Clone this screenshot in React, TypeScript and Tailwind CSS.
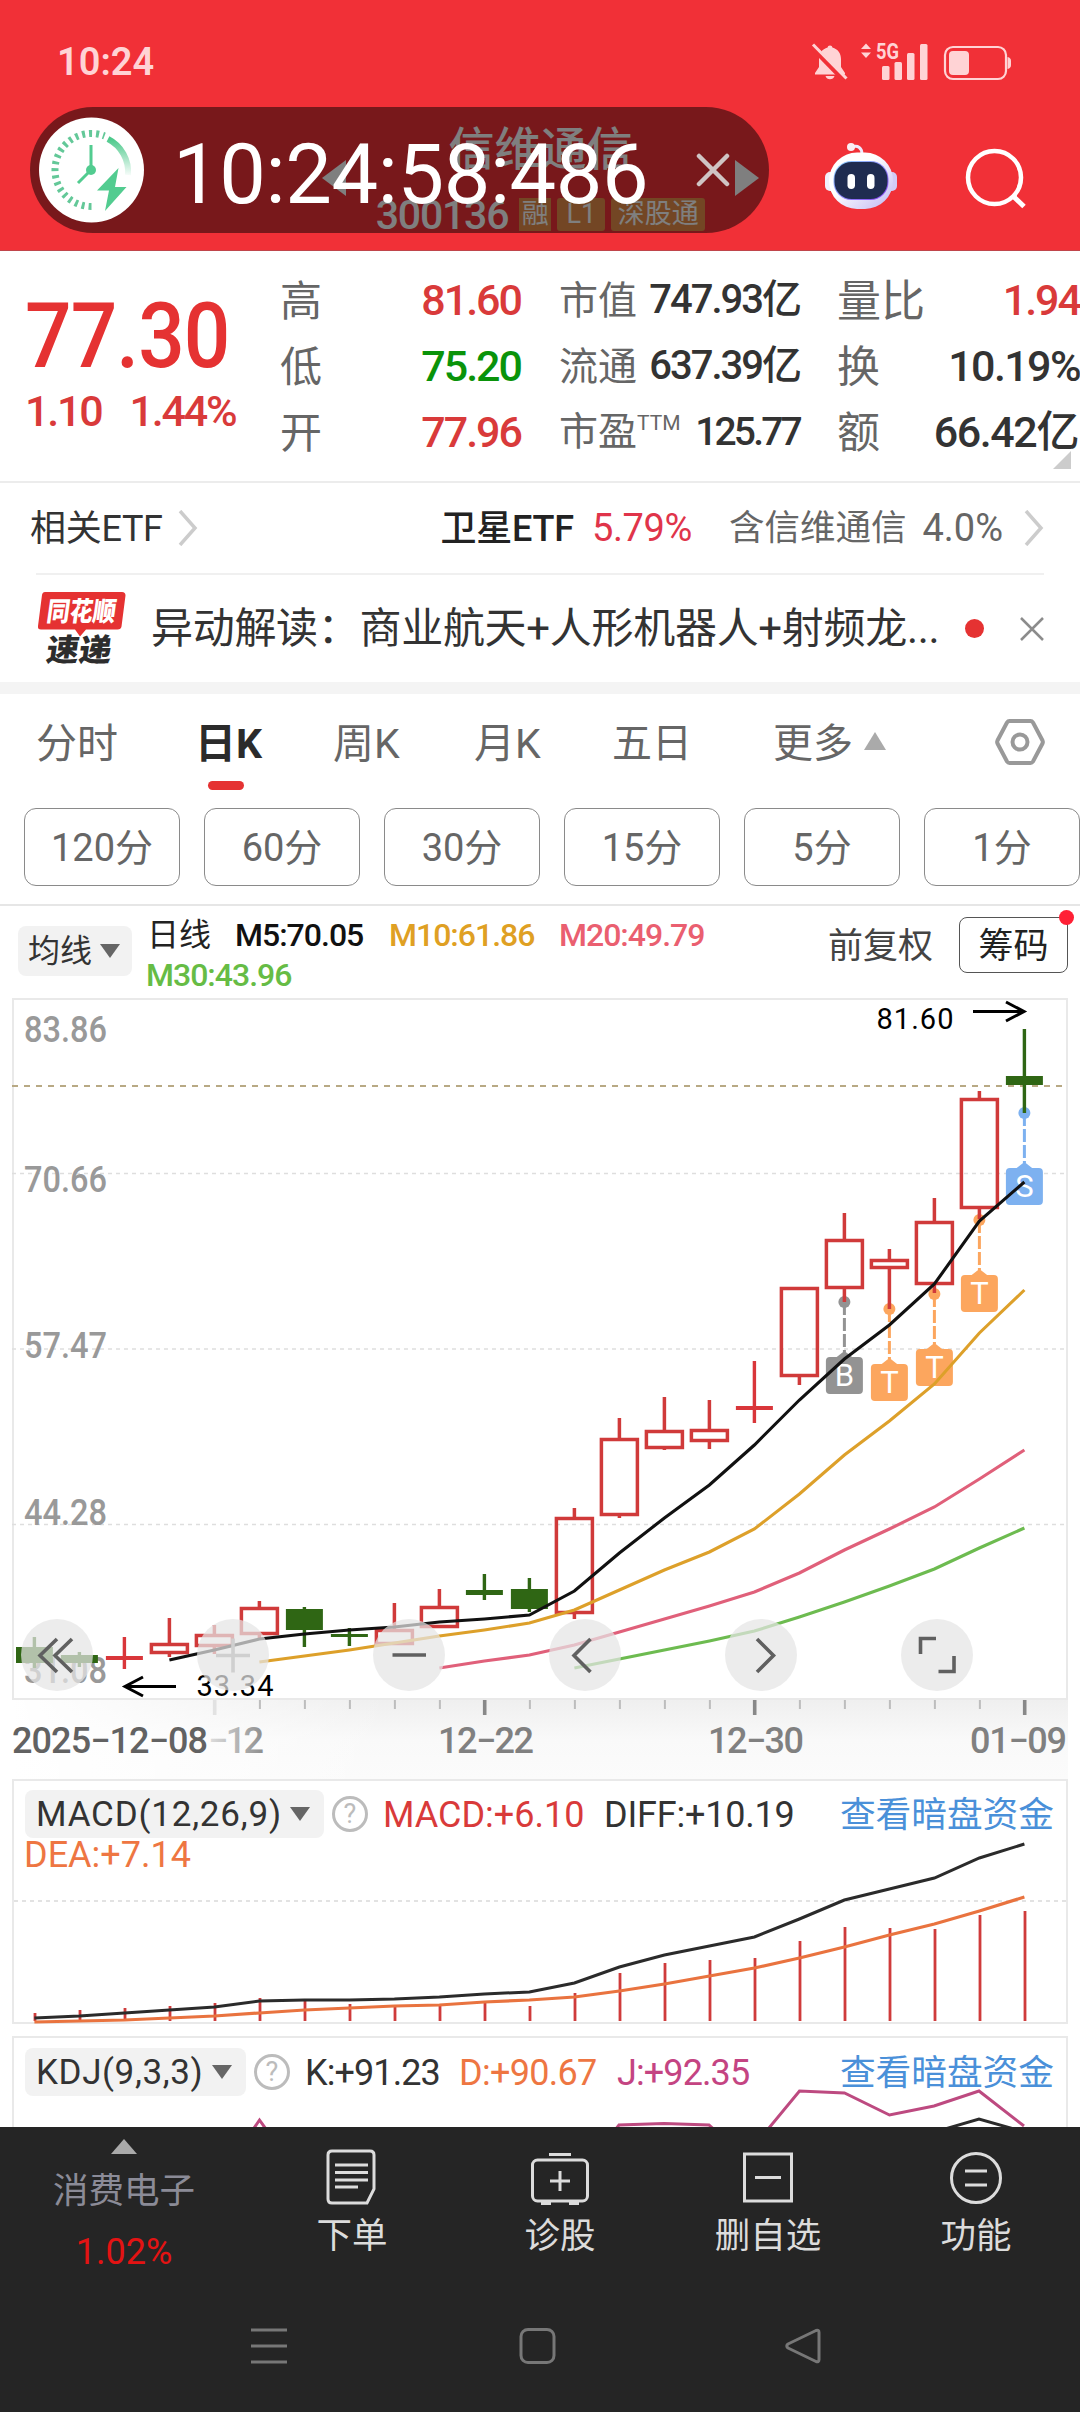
import React from "react";

const candles = [
  // [high, bodyTop, bodyBottom, low, kind]
  [1637, 1647, 1663, 1668, 0],
  [1652, 1655, 1663, 1667, 0],
  [1637, 1656, 1660, 1669, 2],
  [1618, 1643, 1654, 1657, 1],
  [1625, 1634, 1647, 1654, 1],
  [1601, 1607, 1635, 1638, 1],
  [1607, 1609, 1630, 1647, 0],
  [1628, 1634, 1637, 1646, 0],
  [1603, 1629, 1645, 1645, 1],
  [1589, 1606, 1628, 1628, 1],
  [1574, 1590, 1595, 1600, 0],
  [1578, 1589, 1609, 1612, 0],
  [1508, 1517, 1614, 1619, 1],
  [1418, 1438, 1516, 1518, 1],
  [1397, 1430, 1449, 1450, 1],
  [1400, 1429, 1442, 1449, 1],
  [1361, 1406, 1410, 1423, 2],
  [1287, 1287, 1377, 1385, 1],
  [1213, 1239, 1289, 1302, 1],
  [1249, 1259, 1269, 1309, 1],
  [1198, 1221, 1285, 1293, 1],
  [1091, 1098, 1209, 1219, 1],
  [1029, 1076, 1085, 1113, 0],
];

const ma5 = [1660, 1650, 1639, 1634, 1630, 1627, 1622, 1619, 1615, 1591, 1553, 1518, 1485, 1445, 1400, 1359, 1325, 1284, 1221, 1182];
const ma10 = [1662, 1656, 1650, 1643, 1636, 1630, 1623, 1610, 1590, 1570, 1552, 1529, 1494, 1455, 1421, 1384, 1333, 1290];
const ma20 = [1668, 1661, 1655, 1645, 1632, 1619, 1606, 1592, 1573, 1550, 1529, 1507, 1479, 1450];
const ma30 = [1668, 1659, 1650, 1641, 1631, 1617, 1602, 1586, 1569, 1548, 1528];

const macdBars = [2013, 2010, 2008, 2006, 2003, 1998, 2001, 2004, 2007, 2005, 2003, 2006, 1993, 1973, 1963, 1960, 1958, 1941, 1927, 1928, 1929, 1915, 1911];
const diff = [2018, 2016, 2013, 2010, 2007, 2001, 2000, 2000, 1999, 1997, 1994, 1992, 1983, 1967, 1955, 1946, 1937, 1919, 1900, 1889, 1878, 1858, 1844];
const dea = [2022, 2021, 2020, 2018, 2016, 2013, 2010, 2008, 2006, 2005, 2002, 2000, 1997, 1991, 1984, 1976, 1968, 1958, 1947, 1935, 1924, 1911, 1897];

const markers = [
  { i: 18, y: 1302, text: "B", color: "#939393" },
  { i: 19, y: 1309, text: "T", color: "#fca65e" },
  { i: 20, y: 1294, text: "T", color: "#fca65e" },
  { i: 21, y: 1220, text: "T", color: "#fca65e" },
  { i: 22, y: 1113, text: "S", color: "#7db1f0" },
];

const cx = (i: number) => 34.4 + i * 45;

// the values always end on the last candle
const toPoints = (values: number[]) =>
  values.map((y, k) => `${cx(23 - values.length + k)},${y}`).join(" ");

const StatusBar = () => (
  <div className="flex h-[107px] items-start justify-between pl-[57px] pr-[68px] text-[#ffd3d5]">
    <span className="mt-[43px] text-[38px] font-semibold leading-none">10:24</span>
    <svg width="202" height="50" viewBox="810 35 202 50" className="mt-[35px]" fill="#ffd3d5">
      <path d="M830 45.500c1.500 0 2.200.8 2.400 2 5.500 1.500 8.600 6 8.600 11.500v8l4 6v1.500H815v-1.500l4-6v-8c0-5.500 3.100-10 8.600-11.500.2-1.200.9-2 2.400-2zM825.500 76h9c-.8 2.200-2.300 3.200-4.500 3.200s-3.700-1-4.500-3.200z" />
      <path d="M811 45.500L844.500 80" stroke="#f13037" strokeWidth="6" />
      <path d="M813 44.500L846.500 78.500" stroke="#ffd3d5" strokeWidth="3" />
      <path d="M866 43.500l5 5.500h-10zM866 58l5-5.500h-10z" />
      <text x="876" y="59" fontSize="22" fontWeight="700" textLength="23" lengthAdjust="spacingAndGlyphs">5G</text>
      <rect x="882" y="66" width="7.500" height="14" rx="1.500" />
      <rect x="894.500" y="62" width="7.500" height="18" rx="1.500" />
      <rect x="907" y="53" width="7.500" height="27" rx="1.500" />
      <rect x="920" y="44" width="7.500" height="36" rx="1.500" />
      <rect x="945" y="47" width="61" height="32" rx="8" fill="none" stroke="#ffd3d5" strokeWidth="2.200" />
      <rect x="949" y="51" width="20" height="24" rx="4" />
      <path d="M1007.500 57c2.500.4 3.500 2 3.500 4v4c0 2-1 3.600-3.500 4z" />
    </svg>
  </div>
);

const Robot = () => (
  <svg width="74" height="68" viewBox="824 142 74 68">
    <defs>
      <linearGradient id="shell" x1="0" y1="0" x2="1" y2="1">
        <stop offset="0.400" stopColor="#ffffff" />
        <stop offset="1" stopColor="#bfb6f2" />
      </linearGradient>
      <linearGradient id="visor" x1="0" y1="0" x2="1" y2="1">
        <stop offset="0" stopColor="#8fd8ff" />
        <stop offset="1" stopColor="#8a3df0" />
      </linearGradient>
    </defs>
    <path d="M852 147c6-2 10 1 10 7" fill="none" stroke="#efeafd" strokeWidth="3" />
    <circle cx="851" cy="147" r="4" fill="#fbeef4" />
    <rect x="825" y="172" width="12" height="19" rx="5" fill="#f1effc" />
    <rect x="885" y="172" width="12" height="19" rx="5" fill="#d2cbf5" />
    <rect x="829" y="152.500" width="64" height="56.500" rx="28" fill="url(#shell)" />
    <rect x="833.500" y="161" width="55" height="39" rx="18" fill="url(#visor)" />
    <rect x="834.500" y="162" width="53" height="37" rx="17" fill="#1f2c50" />
    <rect x="847.500" y="174" width="7.500" height="15" rx="3.700" fill="#fff" />
    <rect x="867" y="174" width="7.500" height="15" rx="3.700" fill="#fff" />
  </svg>
);

const ClockLogo = () => (
  <svg width="106" height="106" viewBox="39 116 106 106" className="shrink-0">
    <defs>
      <linearGradient id="sweep" x1="0" y1="0" x2="0" y2="1">
        <stop offset="0" stopColor="#4cc98b" />
        <stop offset="1" stopColor="#4cc98b" stopOpacity="0.050" />
      </linearGradient>
    </defs>
    <circle cx="91.500" cy="169" r="52.500" fill="#fff" />
    <path d="M91.500 205.500A36.500 36.500 0 1 1 104.500 134.900" fill="none" stroke="#63c898" strokeWidth="7" strokeDasharray="3 4" />
    <path d="M108 138A37 37 0 0 1 128 174" fill="none" stroke="url(#sweep)" strokeWidth="6" />
    <path d="M91 144v25L78 182" fill="none" stroke="#52cc90" strokeWidth="3" />
    <circle cx="91" cy="169" r="5" fill="#52cc90" />
    <path d="M118.500 167L97 189.500h12L105 210l21.500-24H115z" fill="#52cc90" />
  </svg>
);

const Header = () => (
  <header className="h-[251px] border-b border-[#c0454b] bg-[#f13037] text-white">
    <StatusBar />
    <div className="relative flex h-[126px] items-center">
      <div className="flex w-[437px] items-center justify-between ml-[322px]">
        <svg width="24" height="36" viewBox="0 0 24 36" className="mt-[16px]"><path d="M24 0v36L0 18z" fill="#fff" /></svg>
        <div className="flex flex-col items-center">
          <div className="pt-[17px] text-[46px] font-medium leading-[46px]">信维通信</div>
          <div className="mt-[26px] flex items-center">
            <span className="mr-[11px] text-[41px] font-medium leading-[34px] tracking-[-1.2px]">300136</span>
            <div className="flex h-[33px] gap-[6px] text-[27px] leading-[33px]">
              <span className="w-[32px] bg-[#e68c48] text-center">融</span>
              <span className="w-[48px] rounded-[3px] bg-[#e68c48] text-center">L1</span>
              <span className="w-[94px] rounded-[3px] bg-[#e68c48] text-center">深股通</span>
            </div>
          </div>
        </div>
        <svg width="24" height="36" viewBox="0 0 24 36" className="mt-[16px]"><path d="M0 0v36L24 18z" fill="#fff" /></svg>
      </div>
      <div className="ml-[65px] mt-[12px]"><Robot /></div>
      <svg width="62" height="62" viewBox="964 147 62 62" className="ml-[66px] mt-[16px]" fill="none" stroke="#fff" strokeWidth="4.500">
        <circle cx="994.500" cy="177.500" r="26.500" />
        <path d="M1013.500 196.500l10.500 10" strokeWidth="5" />
      </svg>

      {/* floating clock */}
      <div className="absolute left-[30px] top-0 flex h-[126px] w-[739px] items-center rounded-full bg-black/50 pl-[9px]">
        <ClockLogo />
        <span className="ml-[28px] mt-[8px] w-[523px] shrink-0 text-[83px] leading-none tracking-[-0.4px]">10:24:58:486</span>
        <svg width="34" height="34" viewBox="0 0 34 34" className="shrink-0" stroke="#cfc4c4" strokeWidth="4.500" strokeLinecap="round"><path d="M3 3l28 28M31 3L3 31" /></svg>
      </div>
    </div>
  </header>
);

const Quote = () => (
  <section className="flex h-[232px] border-b-2 border-[#ececec] pt-[16px] font-medium leading-none text-[#333]">
    <div className="w-[280px] pl-[25px] text-[#d93a3a]">
      <div className="mt-[24px] origin-left scale-x-[0.9] text-[91px] tracking-[-1px] text-[#e53232]">77.30</div>
      <div className="mt-[8px] flex gap-[28px] text-[43px] tracking-[-2.2px]">
        <span>1.10</span>
        <span>1.44%</span>
      </div>
    </div>
    <div className="w-[241px]">
      <div className="flex h-[66px] items-center justify-between"><span className="pt-[3px] text-[42px] font-normal text-[#666]">高</span><span className="text-[43px] tracking-[-2px] text-[#d93a3a]">81.60</span></div>
      <div className="flex h-[66px] items-center justify-between"><span className="pt-[3px] text-[42px] font-normal text-[#666]">低</span><span className="text-[43px] tracking-[-2px] text-[#0a930a]">75.20</span></div>
      <div className="flex h-[66px] items-center justify-between"><span className="pt-[3px] text-[42px] font-normal text-[#666]">开</span><span className="text-[43px] tracking-[-2px] text-[#d93a3a]">77.96</span></div>
    </div>
    <div className="ml-[38px] w-[241px] whitespace-nowrap">
      <div className="flex h-[66px] items-center justify-between"><span className="pt-[2px] text-[39px] font-normal text-[#666]">市值</span><span className="text-[40px] tracking-[-2px]">747.93亿</span></div>
      <div className="flex h-[66px] items-center justify-between"><span className="pt-[2px] text-[39px] font-normal text-[#666]">流通</span><span className="text-[40px] tracking-[-2px]">637.39亿</span></div>
      <div className="flex h-[66px] items-center justify-between">
        <span className="flex text-[39px] font-normal text-[#666]">市盈<span className="text-[21px]">TTM</span></span>
        <span className="text-[39px] tracking-[-2.8px]">125.77</span>
      </div>
    </div>
    <div className="ml-[37px] w-[243px] whitespace-nowrap">
      <div className="flex h-[66px] items-center justify-between"><span className="pt-[3px] text-[44px] font-normal text-[#666]">量比</span><span className="text-[43px] tracking-[-2px] text-[#d93a3a]">1.94</span></div>
      <div className="flex h-[66px] items-center justify-between"><span className="pt-[3px] text-[43px] font-normal text-[#666]">换</span><span className="text-[43px] tracking-[-1.600px]">10.19%</span></div>
      <div className="flex h-[66px] items-center justify-between"><span className="pt-[3px] text-[43px] font-normal text-[#666]">额</span><span className="mr-[2px] text-[43px] tracking-[-1.400px]">66.42亿</span></div>
      <svg width="18" height="18" viewBox="0 0 18 18" className="-mt-[14px] ml-[216px]"><path d="M18 0v18H0z" fill="#ccc" /></svg>
    </div>
  </section>
);

const Chevron = () => (
  <svg width="20" height="36" viewBox="0 0 20 36" fill="none" stroke="#ccc" strokeWidth="3.500"><path d="M2 1l15 17L2 35" /></svg>
);

const EtfRow = () => (
  <div className="mr-[36px] flex h-[90px] items-center whitespace-nowrap pl-[30px] text-[36px] leading-none text-[#333]">
    <span className="pt-[2px] tracking-[-0.300px]">相关ETF</span>
    <span className="ml-[15px]"><Chevron /></span>
    <div className="ml-auto flex items-center">
      <span className="pt-[2px] font-medium text-[#222] tracking-[-0.200px]">卫星ETF</span>
      <span className="ml-[18px] text-[38px] tracking-[-0.400px] text-[#e0344a]">5.79%</span>
      <span className="ml-[37px] pt-[2px] text-[35.500px] text-[#666]">含信维通信</span>
      <span className="ml-[16px] text-[38px] text-[#666]">4.0%</span>
      <span className="ml-[21px]"><Chevron /></span>
    </div>
  </div>
);

const NewsRow = () => (
  <div className="flex h-[107px] items-center pl-[37px] pr-[35px] text-[#333]">
    <svg width="90" height="78" viewBox="37 589 90 78" className="overflow-visible">
      <path d="M45 591h77q3.500 0 3.500 3.500l-4 31q-.5 3-4 3H86l-6 7-5-7H41q-3.500 0-3-3.500l4-31q.5-3 3-3z" fill="#e53232" />
      <text x="46" y="620" fontSize="27" fontWeight="900" fill="#fff" textLength="69" lengthAdjust="spacingAndGlyphs" transform="skewX(-8) translate(87 0)">同花顺</text>
      <text x="47" y="660" fontSize="31" fontWeight="900" fill="#2d2d2d" textLength="65" lengthAdjust="spacingAndGlyphs" transform="skewX(-8) translate(91 0)">速递</text>
    </svg>
    <span className="ml-[24px] whitespace-nowrap pt-px text-[42px] leading-none tracking-[-0.300px]">异动解读：商业航天+人形机器人+射频龙...</span>
    <span className="ml-auto h-[19px] w-[19px] rounded-full bg-[#e53232]" />
    <svg width="26" height="26" viewBox="0 0 26 26" className="ml-[35px]" stroke="#8c8c8c" strokeWidth="2.500"><path d="M2 2l22 22M24 2L2 24" /></svg>
  </div>
);

const periods = ["120分", "60分", "30分", "15分", "5分", "1分"];

const Tabs = () => (
  <nav className="h-[212px] overflow-hidden border-b-2 border-[#e6e6e6]">
    <div className="flex h-[114px] items-start pl-[36px] pt-[30px] text-[41px] leading-none text-[#666]">
      <span className="w-[159px]">分时</span>
      <span className="w-[138px] font-bold text-[#2b2b2b]">
        日K
        <i className="ml-[13px] mt-[16px] block h-[9px] w-[36px] rounded-full bg-[#e53232]" />
      </span>
      <span className="w-[141px]">周K</span>
      <span className="w-[138px]">月K</span>
      <span className="w-[161px] text-[40px]">五日</span>
      <span className="flex w-[223px] text-[40px]">
        更多
        <svg width="22" height="18" viewBox="0 0 22 18" className="ml-[11px] mt-[8px]"><path d="M11 0l11 18H0z" fill="#aaa" /></svg>
      </span>
      <svg width="50" height="48" viewBox="0 0 50 48" className="-mt-[6px] -ml-px" fill="none" stroke="#999" strokeWidth="4">
        <path d="M14.500 3h21q1.500 0 2.500 1.500l9.500 18q.7 1.500 0 3L38 43.500q-1 1.500-2.500 1.500h-21q-1.500 0-2.500-1.500l-9.500-18q-.7-1.500 0-3L12 4.500Q13 3 14.500 3z" />
        <circle cx="25" cy="24" r="7.500" />
      </svg>
    </div>
    <div className="flex gap-[24px] pl-[24px]">
      {periods.map((p) => (
        <div key={p} className="flex h-[78px] w-[156px] shrink-0 items-center justify-center rounded-[12px] border-[1.5px] border-[#8a8a8a] pt-px text-[38px] leading-none text-[#666]">
          {p}
        </div>
      ))}
    </div>
  </nav>
);

const Caret = () => (
  <svg width="20" height="14" viewBox="0 0 20 14"><path d="M0 0h20L10 14z" fill="#666" /></svg>
);

const MaBar = () => (
  <div className="flex h-[92px] items-start pl-[18px] pt-[9px] leading-none">
    <div className="mt-[11px] flex h-[50px] w-[114px] items-center justify-between rounded-[8px] bg-[#f2f2f2] pl-[10px] pr-[12px] text-[32px] text-[#333]">
      均线 <Caret />
    </div>
    <div className="ml-[15px] w-[640px] text-[32px] font-medium leading-[40px] tracking-[-1px]">
      <div className="flex">
        <span className="w-[88px] font-normal tracking-normal text-[#222]">日线</span>
        <span className="w-[154px] text-[#111]">M5:70.05</span>
        <span className="w-[170px] text-[#dfa023]">M10:61.86</span>
        <span className="text-[#ea5f70]">M20:49.79</span>
      </div>
      <div className="-ml-px text-[#66bc45]">M30:43.96</div>
    </div>
    <span className="ml-[41px] mt-[14px] text-[35px] text-[#444]">前复权</span>
    <div className="relative ml-[26px] mt-[2px] flex h-[56px] w-[109px] items-center justify-center rounded-[8px] border-[1.5px] border-[#555] pt-[2px] text-[35px] text-[#222]">
      筹码
      <i className="absolute -right-[7px] -top-[8px] h-[15px] w-[15px] rounded-full bg-[#ff2035]" />
    </div>
  </div>
);

const Candle = ({ i }: { i: number }) => {
  const [high, top, bottom, low, kind] = candles[i];
  const x = cx(i);
  if (kind === 1) {
    return (
      <g stroke="#d03a3a" strokeWidth="3.500" fill="none">
        <path d={`M${x} ${high}V${top + 1}M${x} ${bottom - 1}V${low}`} />
        <rect x={x - 18} y={top + 1.5} width="36" height={bottom - top - 3} />
      </g>
    );
  }
  const color = kind === 0 ? "#2f6614" : "#d9363a";
  const left = Math.max(x - 18.5, 16);
  return (
    <g fill={color}>
      <rect x={x - 1.7} y={high} width="3.400" height={low - high} />
      <rect x={left} y={top} width={x + 18.5 - left} height={bottom - top} />
    </g>
  );
};

const KChart = () => (
  <svg width="1080" height="781" viewBox="0 998 1080 781" className="block">
    <defs>
      <linearGradient id="axisBg" x1="0" y1="0" x2="0" y2="1">
        <stop offset="0" stopColor="#efefef" />
        <stop offset="0.500" stopColor="#f9f9f9" />
        <stop offset="1" stopColor="#fbfbfb" />
      </linearGradient>
      <linearGradient id="axisFade" x1="0" y1="0" x2="1" y2="0">
        <stop offset="0" stopColor="#fff" />
        <stop offset="1" stopColor="#fff" stopOpacity="0" />
      </linearGradient>
      <linearGradient id="dateFade" gradientUnits="userSpaceOnUse" x1="205" y1="0" x2="265" y2="0">
        <stop offset="0" stopColor="#e4e4e4" />
        <stop offset="1" stopColor="#8c8c8c" />
      </linearGradient>
    </defs>

    <rect x="12" y="1700" width="1056" height="79" fill="url(#axisBg)" />
    <rect x="12" y="1700" width="380" height="79" fill="url(#axisFade)" />
    <rect x="13" y="999" width="1054" height="700" fill="none" stroke="#e9e9e9" strokeWidth="2" />

    <g stroke="#dedede" strokeWidth="1.500" strokeDasharray="4 4">
      <path d="M12 1173.500H1067M12 1349H1067M12 1524.500H1067" />
    </g>
    <path d="M12 1086H1067" stroke="#b8a984" strokeWidth="2" strokeDasharray="6 6" />

    <g fill="#999" fontSize="36.500" fontWeight="500">
      <text x="24" y="1041.500" textLength="83" lengthAdjust="spacingAndGlyphs">83.86</text>
      <text x="24" y="1191.500" textLength="83" lengthAdjust="spacingAndGlyphs">70.66</text>
      <text x="24" y="1357.500" textLength="83" lengthAdjust="spacingAndGlyphs">57.47</text>
      <text x="24" y="1524.500" textLength="83" lengthAdjust="spacingAndGlyphs">44.28</text>
      <text x="24" y="1682.500" textLength="83" lengthAdjust="spacingAndGlyphs">31.08</text>
    </g>

    {markers.map((m) => (
      <g key={m.i} fill={m.color}>
        <circle cx={cx(m.i)} cy={m.y} r="6" />
        <path d={`M${cx(m.i)} ${m.y}v50`} stroke={m.color} strokeWidth="3" strokeDasharray="13 3" />
        <path d={`M${cx(m.i) - 9} ${m.y + 56}l9-7 9 7z`} />
        <rect x={cx(m.i) - 18.5} y={m.y + 55} width="37" height="37" rx="4" />
        <text x={cx(m.i)} y={m.y + 84} fontSize="31" textAnchor="middle" fill="#fff">{m.text}</text>
      </g>
    ))}

    {candles.map((_, i) => <Candle key={i} i={i} />)}

    <g fill="none" strokeWidth="3.100">
      <polyline points={toPoints(ma30)} stroke="#6dbb50" />
      <polyline points={toPoints(ma20)} stroke="#e0607a" />
      <polyline points={toPoints(ma10)} stroke="#dda02a" />
      <polyline points={toPoints(ma5)} stroke="#111" />
    </g>

    <g fill="none" stroke="#000" strokeWidth="3">
      <path d="M973 1011.500h50M1006 1002l18 9.500-18 9.500" />
      <path d="M176 1686.500h-50M143 1677l-18 9.500 18 9.500" />
    </g>
    <g fontSize="29" fill="#000">
      <text x="876.500" y="1029" textLength="77">81.60</text>
      <text x="196.500" y="1695.500" textLength="77">33.34</text>
    </g>

    {/* floating controls */}
    <g fill="#e4e4e4" fillOpacity="0.720">
      {[57, 233, 409, 585, 761, 937].map((x) => <circle key={x} cx={x} cy="1655" r="36" />)}
    </g>
    <g fill="none" stroke="#606060" strokeWidth="3.600">
      <path d="M57 1639l-17 16.500 17 16.500M72 1639l-17 16.500 17 16.500" />
      <path d="M216 1655.500h34M233 1638.500v34" stroke="#cfcfcf" />
      <path d="M392.500 1655h33.500" />
      <path d="M590.500 1639l-16.500 16.500 16.500 16.500M757 1639l16.500 16.500-16.500 16.500" />
      <path d="M920.500 1654v-15.500H936M938.500 1671.500H954V1656" />
    </g>

    {Array.from({ length: 19 }, (_, k) => k + 4).map((i) => {
      const major = [4, 10, 16, 22].includes(i);
      return (
        <rect
          key={i}
          x={cx(i) + 0.5 - (major ? 2 : 1)}
          y="1700"
          width={major ? 3.6 : 2}
          height={major ? 15 : 9}
          fill={i === 4 ? "#e2e2e2" : major ? "#888" : "#bdbdbd"}
        />
      );
    })}
    <g fontSize="36" fontWeight="500" fill="#808080">
      <text x="12" y="1753" textLength="196" fill="#626262">2025−12−08</text>
      <text x="208" y="1753" textLength="56" fill="url(#dateFade)">−12</text>
      <text x="438" y="1753" textLength="96">12−22</text>
      <text x="708" y="1753" textLength="96">12−30</text>
      <text x="970" y="1753" textLength="97">01−09</text>
    </g>
  </svg>
);

const Help = () => (
  <span className="flex h-[36px] w-[36px] items-center justify-center rounded-full border-[3px] border-[#bcbcbc] text-[27px] leading-none text-[#bcbcbc]">?</span>
);

const MacdPanel = () => (
  <section className="relative mx-[12px] h-[245px] border-2 border-[#e9e9e9] leading-none">
    <svg width="1054" height="245" viewBox="14 1781 1054 245" className="absolute left-0 top-0" fill="none">
      <path d="M14 1901H1067" stroke="#e2e2e2" strokeWidth="2" strokeDasharray="4 4" />
      {macdBars.map((y, i) => <path key={i} d={`M${cx(i) + 0.6} ${y}V2021`} stroke="#cf3b3b" strokeWidth="2.800" />)}
      <polyline points={toPoints(diff)} stroke="#2b2b2b" strokeWidth="3" />
      <polyline points={toPoints(dea)} stroke="#e9733f" strokeWidth="3.200" />
    </svg>
    <div className="relative flex items-center whitespace-nowrap pl-[11px] pr-[12px] pt-[9px] text-[36px] text-[#333]">
      <div className="flex h-[48px] w-[299px] items-center justify-between rounded-[8px] bg-[#f2f2f2] pl-[11px] pr-[14px] text-[35px] tracking-[0.800px]">
        MACD(12,26,9) <Caret />
      </div>
      <span className="ml-[8px]"><Help /></span>
      <span className="ml-[15px] w-[221px] pt-px text-[#d93a3a]">MACD:+6.10</span>
      <span className="pt-px tracking-[-0.200px]">DIFF:+10.19</span>
      <span className="ml-auto pt-[3px] text-[35.7px] text-[#4a90d9]">查看暗盘资金</span>
    </div>
    <div className="relative -mt-px pl-[10px] text-[36px] text-[#ee7642]">DEA:+7.14</div>
  </section>
);

const KdjPanel = () => (
  <section className="relative mx-[12px] mt-[12px] h-[91px] overflow-hidden border-2 border-b-0 border-[#e9e9e9] leading-none">
    <svg width="1054" height="90" viewBox="14 2038 1054 90" className="absolute left-0 top-0" fill="none" strokeWidth="3">
      <path d="M250 2134l9.500-14 10 14M612 2134l7-9 45-1.500 45 1.500 10 9M764 2134l35.500-43 45 2 45 22 44.500-9 45-15 45 35" stroke="#bd4a80" />
      <path d="M945 2129l34-10 35 10" stroke="#2b2b2b" />
    </svg>
    <div className="relative flex items-center whitespace-nowrap pl-[11px] pr-[12px] pt-[10px] text-[36px] text-[#333]">
      <div className="flex h-[48px] w-[221px] items-center justify-between rounded-[8px] bg-[#f2f2f2] pl-[11px] pr-[14px] text-[35px] tracking-[0.600px]">
        KDJ(9,3,3) <Caret />
      </div>
      <span className="ml-[8px]"><Help /></span>
      <span className="ml-[15px] w-[154px] pt-px tracking-[-0.9px]">K:+91.23</span>
      <span className="w-[158px] pt-px tracking-[-0.7px] text-[#ee7642]">D:+90.67</span>
      <span className="pt-px tracking-[-0.9px] text-[#c44482]">J:+92.35</span>
      <span className="ml-auto pt-[3px] text-[35.7px] text-[#4a90d9]">查看暗盘资金</span>
    </div>
  </section>
);

const actions = [
  {
    label: "下单",
    icon: (
      <>
        <path d="M10 4h38q4 0 4 4v34l-7 14H10q-4 0-4-4V8q0-4 4-4z" />
        <path d="M13 18h33M13 25.500h33M13 33h33M13 40h23" />
      </>
    ),
  },
  {
    label: "诊股",
    icon: (
      <>
        <rect x="2.500" y="13" width="55" height="41" rx="5" />
        <path d="M19 7.500h22M20 34h20M30 24v20M11 56.500h10M39 56.500h10" />
      </>
    ),
  },
  {
    label: "删自选",
    icon: (
      <>
        <rect x="6.500" y="7" width="47" height="47" />
        <path d="M17 30.500h26" />
      </>
    ),
  },
  {
    label: "功能",
    icon: (
      <>
        <circle cx="30" cy="31" r="24.500" />
        <path d="M19 24h22M19 38h22" />
      </>
    ),
  },
];

const BottomBar = () => (
  <footer className="h-[285px] bg-[#252525] leading-none">
    <div className="flex h-[180px]">
      <div className="flex w-[248px] flex-col items-center pt-[12px]">
        <svg width="26" height="15" viewBox="0 0 26 15"><path d="M13 0l13 15H0z" fill="#aaa" /></svg>
        <span className="mt-[20px] text-[35.5px] text-[#8b8b97]">消费电子</span>
        <span className="mt-[24px] text-[36px] text-[#e31313]">1.02%</span>
      </div>
      {actions.map((a) => (
        <div key={a.label} className="flex w-[208px] flex-col items-center pt-[20px] text-[35.5px] text-[#dcdcdc]">
          <svg width="60" height="60" viewBox="0 0 60 60" fill="none" stroke="#dcdcdc" strokeWidth="3">{a.icon}</svg>
          <span className="mt-[12px]">{a.label}</span>
        </div>
      ))}
    </div>
    <div className="flex items-center pl-[250px] pt-[19px]">
      <svg width="38" height="40" viewBox="0 0 38 40" stroke="#777" strokeWidth="3"><path d="M1 4h36M1 20h36M1 36h36" /></svg>
      <svg width="38" height="40" viewBox="0 0 38 40" className="ml-[231px]" fill="none" stroke="#777" strokeWidth="3"><rect x="2" y="3.500" width="33" height="33" rx="7" /></svg>
      <svg width="38" height="40" viewBox="0 0 38 40" className="ml-[227px]" fill="none" stroke="#777" strokeWidth="3" strokeLinejoin="round"><path d="M32 4.500q3-1 3 2v27q0 3-3 2L4 22q-2.500-2 0-4z" /></svg>
    </div>
  </footer>
);

export default function App() {
  return (
    <div className="h-[2412px] w-[1080px] overflow-hidden bg-white font-[Roboto,'Noto_Sans_CJK_SC',sans-serif]">
      <Header />
      <Quote />
      <EtfRow />
      <div className="mx-[36px] h-[2px] bg-[#f0f0f0]" />
      <NewsRow />
      <div className="h-[12px] bg-[#f4f4f4]" />
      <Tabs />
      <MaBar />
      <KChart />
      <MacdPanel />
      <KdjPanel />
      <BottomBar />
    </div>
  );
}
